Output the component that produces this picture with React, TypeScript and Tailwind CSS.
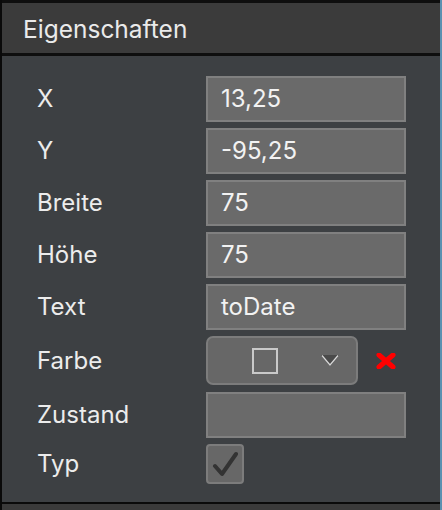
import React from "react";

const font = { fontFamily: "Inter, 'Noto Sans', sans-serif" };

function Row({ label, children, h = "h-[46px]" }: { label: string; children: React.ReactNode; h?: string }) {
  return (
    <div className={`flex items-center ${h}`}>
      <div className="w-[204px] shrink-0 pl-[35px] text-[24px] text-[#ececec] leading-none">{label}</div>
      {children}
    </div>
  );
}

function Field({ value }: { value?: string }) {
  return (
    <div className="w-[200px] h-[46px] bg-[#6a6a6a] border-2 border-[#808080] flex items-center pl-[13px] text-[24px] text-[#f2f2f2] leading-none">
      {value}
    </div>
  );
}

export default function App() {
  return (
    <div className="w-[442px] h-[510px] bg-[#3a3a3a] flex" style={font}>
      <div className="w-[440px] h-full flex flex-col border-l-2 border-[#0a0a0a]">
        <div className="h-[3px] bg-[#0e0e0e]" />
        <div className="h-[50px] bg-[#3b3b3b] flex items-center pl-[21px] pt-[3px] text-[24.5px] text-[#eaeaea]">
          Eigenschaften
        </div>
        <div className="h-[3px] bg-[#0e0e0e]" />
        <div className="h-[446px] bg-[#3d4043] flex flex-col pt-[20px] gap-[6px]">
          <Row label="X"><Field value="13,25" /></Row>
          <Row label="Y"><Field value="-95,25" /></Row>
          <Row label="Breite"><Field value="75" /></Row>
          <Row label="Höhe"><Field value="75" /></Row>
          <Row label="Text"><Field value="toDate" /></Row>
          <Row label="Farbe" h="h-[49px] mb-[1px]">
            <div className="w-[152px] h-[49px] bg-[#676767] border-2 border-[#7c7c7c] rounded-[7px] flex items-center">
              <div className="ml-[44px] w-[26px] h-[26px] border-2 border-[#c9c9c9]" />
              <svg className="ml-[42px]" width="20" height="14" viewBox="0 0 20 14">
                <path d="M1 1 L19 1 L10 12 Z" fill="#4a4a4a" />
                <path d="M2 1.5 L10 11 L18 1.5" fill="none" stroke="#d8d8d8" strokeWidth="1.2" />
              </svg>
            </div>
            <svg className="ml-[18px]" width="20" height="16" viewBox="0 0 20 16">
              <path d="M3 2 L17 14 M17 2 L3 14" stroke="#ff0000" strokeWidth="5" strokeLinecap="round" />
            </svg>
          </Row>
          <Row label="Zustand"><Field /></Row>
          <Row label="Typ" h="h-[40px]">
            <div className="w-[38px] h-[40px] bg-[#676767] border-2 border-[#7c7c7c] rounded-[4px] flex items-center justify-center">
              <svg width="26" height="26" viewBox="0 0 26 26">
                <path d="M3 15 L10 23 L24 3" fill="none" stroke="#333333" strokeWidth="4" strokeLinecap="round" strokeLinejoin="round" />
              </svg>
            </div>
          </Row>
        </div>
        <div className="h-[2px] bg-[#0a0a0a]" />
        <div className="flex-1 bg-[#3a3a3a]" />
      </div>
      <div className="w-[2px] h-full bg-[#5a90b0]" />
    </div>
  );
}
